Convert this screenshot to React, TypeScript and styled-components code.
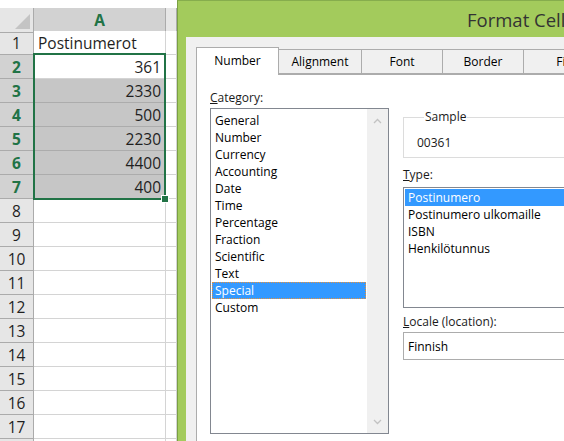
import React from 'react';
import styled, { createGlobalStyle } from 'styled-components';

const GlobalStyle = createGlobalStyle`
  html, body { margin: 0; padding: 0; background: #ffffff; }
  body { font-family: "Open Sans", "Noto Sans", sans-serif; }
  #root { width: 564px; height: 441px; }
`;

const Screen = styled.div`
  width: 564px;
  height: 441px;
  overflow: hidden;
  display: flex;
  background: #ffffff;
`;

/* ---------------- Spreadsheet ---------------- */

const Sheet = styled.div`
  position: relative;
  width: 177px;
  flex: none;
  display: flex;
  flex-direction: column;
  background: #ffffff;
  font-family: "Open Sans", "Noto Sans", sans-serif;
  font-size: 15.5px;
  color: #1f1f1f;
`;

const TopStrip = styled.div`
  height: 8px;
  flex: none;
  background: #ffffff;
`;

const Row = styled.div<{ $h?: number }>`
  display: grid;
  grid-template-columns: 34px 132px 11px;
  height: ${(p) => p.$h ?? 24}px;
  flex: none;
`;

const Corner = styled.div`
  position: relative;
  background: #e6e6e6;
  border-right: 1px solid #ababab;
  border-bottom: 1px solid #ababab;
  box-sizing: border-box;
  &::after {
    content: '';
    position: absolute;
    right: 3px;
    bottom: 3px;
    width: 0;
    height: 0;
    border-style: solid;
    border-width: 0 0 15px 15px;
    border-color: transparent transparent #c4c4c4 transparent;
  }
`;

const ColHeader = styled.div<{ $active?: boolean }>`
  box-sizing: border-box;
  display: flex;
  align-items: center;
  justify-content: center;
  background: ${(p) => (p.$active ? '#d2d2d2' : '#e6e6e6')};
  color: ${(p) => (p.$active ? '#217346' : '#1f1f1f')};
  font-weight: ${(p) => (p.$active ? 700 : 400)};
  border-right: 1px solid #ababab;
  border-bottom: ${(p) => (p.$active ? '2px solid #217346' : '1px solid #ababab')};
  padding-top: ${(p) => (p.$active ? '1px' : '0')};
`;

const RowHeader = styled.div<{ $active?: boolean }>`
  box-sizing: border-box;
  display: flex;
  align-items: center;
  justify-content: center;
  background: ${(p) => (p.$active ? '#d2d2d2' : '#e6e6e6')};
  color: ${(p) => (p.$active ? '#217346' : '#1f1f1f')};
  font-weight: ${(p) => (p.$active ? 700 : 400)};
  border-right: 1px solid #ababab;
  border-bottom: 1px solid #ababab;
`;

const Cell = styled.div<{ $selected?: boolean; $right?: boolean }>`
  box-sizing: border-box;
  display: flex;
  align-items: center;
  justify-content: ${(p) => (p.$right ? 'flex-end' : 'flex-start')};
  padding: 0 4px;
  background: ${(p) => (p.$selected ? '#c6c6c6' : '#ffffff')};
  border-right: 1px solid #d4d4d4;
  border-bottom: 1px solid ${(p) => (p.$selected ? '#acacac' : '#d4d4d4')};
  white-space: nowrap;
  overflow: hidden;
`;

const SelectionBox = styled.div`
  position: absolute;
  left: 33px;
  top: 53px;
  width: 133px;
  height: 147px;
  box-sizing: border-box;
  border: 2px solid #217346;
  pointer-events: none;
`;

const FillHandle = styled.div`
  position: absolute;
  right: -5px;
  bottom: -5px;
  width: 6px;
  height: 6px;
  background: #217346;
  border: 1px solid #ffffff;
`;

/* ---------------- Dialog ---------------- */

const Dialog = styled.div`
  flex: none;
  width: 420px;
  display: flex;
  flex-direction: column;
  background: #a3cb5c;
  border-left: 1px solid #7aa043;
  border-top: 1px solid #86ad4d;
  font-family: "Open Sans", "Noto Sans", sans-serif;
  font-size: 12px;
  color: #000000;
`;

const TitleBar = styled.div`
  height: 36px;
  flex: none;
  display: flex;
  align-items: center;
  padding-left: 289px;
  font-size: 18.5px;
  color: #333333;
  white-space: nowrap;
`;

const Body = styled.div`
  flex: 1;
  margin-left: 8px;
  background: #f0f0f0;
  padding: 10px 0 0 10px;
  display: flex;
  flex-direction: column;
`;

const TabStrip = styled.div`
  display: flex;
  align-items: flex-end;
  height: 27px;
  flex: none;
  position: relative;
  z-index: 1;
`;

const Tab = styled.div<{ $active?: boolean; $w: number }>`
  box-sizing: border-box;
  width: ${(p) => p.$w}px;
  flex: none;
  height: ${(p) => (p.$active ? 28 : 25)}px;
  margin-bottom: ${(p) => (p.$active ? -1 : 0)}px;
  margin-left: -1px;
  &:first-child { margin-left: 0; }
  display: flex;
  align-items: center;
  justify-content: center;
  padding-bottom: ${(p) => (p.$active ? 2 : 0)}px;
  background: ${(p) => (p.$active ? '#ffffff' : '#f0f0f0')};
  border: 1px solid #acacac;
  border-bottom: ${(p) => (p.$active ? 'none' : '1px solid #acacac')};
  white-space: nowrap;
  position: relative;
  z-index: ${(p) => (p.$active ? 2 : 1)};
`;

const Panel = styled.div`
  flex: 1;
  background: #ffffff;
  border: 1px solid #acacac;
  border-right: none;
  border-bottom: none;
  display: flex;
  align-items: flex-start;
  padding: 14px 0 0 13px;
  gap: 14px;
`;

const Column = styled.div<{ $w: number; $top?: number }>`
  width: ${(p) => p.$w}px;
  flex: none;
  display: flex;
  flex-direction: column;
  margin-top: ${(p) => p.$top ?? 0}px;
`;

const Label = styled.div<{ $gap?: number }>`
  line-height: 17px;
  margin-top: ${(p) => p.$gap ?? 0}px;
  white-space: nowrap;
  color: #1a1a1a;
`;

const ListBox = styled.div<{ $h: number; $gap?: number }>`
  box-sizing: border-box;
  height: ${(p) => p.$h}px;
  margin-top: ${(p) => p.$gap ?? 2}px;
  border: 1px solid #828790;
  display: flex;
  background: #ffffff;
`;

const Items = styled.div<{ $pt: number }>`
  flex: 1;
  display: flex;
  flex-direction: column;
  padding: ${(p) => p.$pt}px 1px 0 1px;
  min-width: 0;
`;

const Item = styled.div<{ $selected?: boolean; $focus?: boolean }>`
  height: 17px;
  line-height: 17px;
  padding-left: 3px;
  white-space: nowrap;
  background: ${(p) => (p.$selected ? '#3399ff' : 'transparent')};
  color: ${(p) => (p.$selected ? '#ffffff' : '#000000')};
  outline: ${(p) => (p.$focus ? '1px dotted #e8923a' : 'none')};
  outline-offset: -1px;
`;

const ScrollBar = styled.div`
  width: 21px;
  flex: none;
  background: #f0f0f0;
  display: flex;
  flex-direction: column;
  justify-content: space-between;
  align-items: center;
  padding: 9px 0 8px;
  box-sizing: border-box;
`;

const GroupBox = styled.fieldset`
  margin: 0;
  padding: 9px 0 6px 13px;
  border: 1px solid #dcdcdc;
  border-right: none;
  min-width: 0;
`;

const Legend = styled.legend`
  padding: 0 1px;
  margin-left: 7px;
  line-height: 16px;
  color: #1a1a1a;
`;

const SampleValue = styled.div`
  line-height: 17px;
  color: #1a1a1a;
`;

const ComboBox = styled.div`
  box-sizing: border-box;
  height: 28px;
  margin-top: 2px;
  border: 1px solid #acacac;
  border-right: none;
  display: flex;
  align-items: center;
  padding-left: 4px;
  background: #ffffff;
`;

const Chevron = ({ up }: { up?: boolean }) => (
  <svg width="9" height="6" viewBox="0 0 9 6">
    <path
      d={up ? 'M1 5 L4.5 1.5 L8 5' : 'M1 1 L4.5 4.5 L8 1'}
      fill="none"
      stroke="#c2c2c2"
      strokeWidth="1.3"
    />
  </svg>
);

const categories = [
  'General',
  'Number',
  'Currency',
  'Accounting',
  'Date',
  'Time',
  'Percentage',
  'Fraction',
  'Scientific',
  'Text',
  'Special',
  'Custom',
];

const types = ['Postinumero', 'Postinumero ulkomaille', 'ISBN', 'Henkilötunnus'];

const values: Record<number, string> = {
  2: '361',
  3: '2330',
  4: '500',
  5: '2230',
  6: '4400',
  7: '400',
};

export default function App() {
  const rows = Array.from({ length: 18 }, (_, i) => i + 1);
  return (
    <Screen>
      <GlobalStyle />
      <Sheet>
        <TopStrip />
        <Row $h={23}>
          <Corner />
          <ColHeader $active>A</ColHeader>
          <ColHeader />
        </Row>
        {rows.map((r) => {
          const inSel = r >= 2 && r <= 7;
          return (
            <Row key={r}>
              <RowHeader $active={inSel}>{r}</RowHeader>
              {r === 1 ? (
                <Cell>Postinumerot</Cell>
              ) : (
                <Cell $right $selected={inSel && r !== 2}>
                  {values[r] ?? ''}
                </Cell>
              )}
              <Cell />
            </Row>
          );
        })}
        <SelectionBox>
          <FillHandle />
        </SelectionBox>
      </Sheet>

      <Dialog>
        <TitleBar>Format Cells</TitleBar>
        <Body>
          <TabStrip>
            <Tab $active $w={83}>Number</Tab>
            <Tab $w={84}>Alignment</Tab>
            <Tab $w={82}>Font</Tab>
            <Tab $w={82}>Border</Tab>
            <Tab $w={82}>Fill</Tab>
          </TabStrip>
          <Panel>
            <Column $w={179}>
              <Label>
                <u>C</u>ategory:
              </Label>
              <ListBox $h={326}>
                <Items $pt={3}>
                  {categories.map((c) => (
                    <Item key={c} $selected={c === 'Special'} $focus={c === 'Special'}>
                      {c}
                    </Item>
                  ))}
                </Items>
                <ScrollBar>
                  <Chevron up />
                  <Chevron />
                </ScrollBar>
              </ListBox>
            </Column>
            <Column $w={200} $top={20}>
              <GroupBox>
                <Legend>Sample</Legend>
                <SampleValue>00361</SampleValue>
              </GroupBox>
              <Label $gap={8}>
                <u>T</u>ype:
              </Label>
              <ListBox $h={121} $gap={4}>
                <Items $pt={1}>
                  {types.map((t) => (
                    <Item key={t} $selected={t === 'Postinumero'}>
                      {t}
                    </Item>
                  ))}
                </Items>
              </ListBox>
              <Label $gap={5}>
                <u>L</u>ocale (location):
              </Label>
              <ComboBox>Finnish</ComboBox>
            </Column>
          </Panel>
        </Body>
      </Dialog>
    </Screen>
  );
}
